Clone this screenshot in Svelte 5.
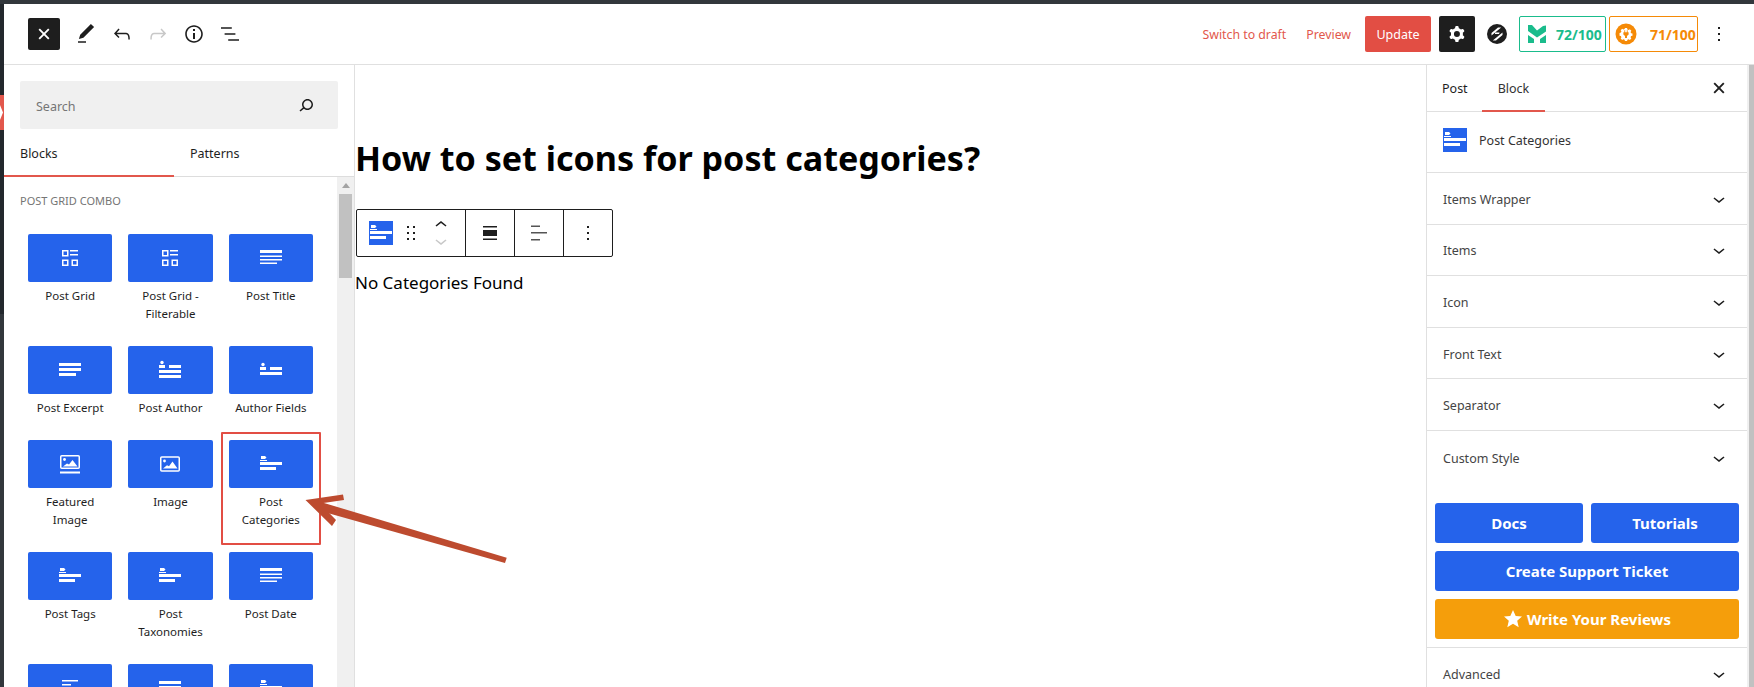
<script>
  const tiles = [
    { label: 'Post Grid', icon: 'grid' },
    { label: 'Post Grid -\nFilterable', icon: 'grid' },
    { label: 'Post Title', icon: 'title' },
    { label: 'Post Excerpt', icon: 'excerpt' },
    { label: 'Post Author', icon: 'author' },
    { label: 'Author Fields', icon: 'fields' },
    { label: 'Featured\nImage', icon: 'featured' },
    { label: 'Image', icon: 'image' },
    { label: 'Post\nCategories', icon: 'cats' },
    { label: 'Post Tags', icon: 'cats' },
    { label: 'Post\nTaxonomies', icon: 'cats' },
    { label: 'Post Date', icon: 'title' },
    { label: '', icon: 'short' },
    { label: '', icon: 'bars' },
    { label: '', icon: 'cats' }
  ];
  const rows = ['Items Wrapper', 'Items', 'Icon', 'Front Text', 'Separator', 'Custom Style'];
</script>

{#snippet chevron()}
  <svg class="chev" width="24" height="24" viewBox="0 0 24 24" fill="#1e1e1e"><path d="M17.5 11.6L12 16l-5.5-4.4.9-1.2L12 14l4.5-3.6 1 1.2z" /></svg>
{/snippet}

{#snippet cross()}
  <svg width="24" height="24" viewBox="0 0 24 24" fill="none" stroke-width="1.9"><path d="M7.2 7.2l9.6 9.6M16.8 7.2l-9.6 9.6" stroke="currentColor" /></svg>
{/snippet}

{#snippet catGlyph()}
  <path fill="#fff" d="M2 4h4l1.5 1.5L6 7H2zM1 8h7v1H1zM1 10h22v3H1zM1 15h16v3H1z" />
{/snippet}

{#snippet glyph(name)}
  <svg class="glyph" width="24" height="24" viewBox="0 0 24 24" fill="#fff">
    {#if name === 'grid'}
      <g fill="none" stroke="#fff" stroke-width="1.5">
        <rect x="4.75" y="4.75" width="5" height="5" /><rect x="4.75" y="14.25" width="5" height="5" /><rect x="14.25" y="14.25" width="5" height="5" />
      </g>
      <rect x="12" y="4" width="8" height="1.5" /><rect x="12" y="8" width="8" height="1.5" />
    {:else if name === 'title'}
      <rect x="1" y="4" width="22" height="3" /><rect x="1" y="9.5" width="22" height="1.5" /><rect x="1" y="13" width="22" height="1.5" /><rect x="1" y="16.5" width="17" height="1.5" />
    {:else if name === 'excerpt'}
      <rect x="1" y="5" width="22" height="3" /><rect x="1" y="10" width="22" height="3" /><rect x="1" y="15" width="17" height="3" />
    {:else if name === 'author'}
      <circle cx="4" cy="4.5" r="1.7" /><rect x="1" y="7" width="6" height="3" /><rect x="11" y="7" width="12" height="3" /><rect x="1" y="12" width="22" height="3" /><rect x="1" y="17" width="22" height="3" />
    {:else if name === 'fields'}
      <circle cx="4" cy="6.5" r="1.7" /><rect x="1" y="9" width="6" height="3" /><rect x="11" y="9" width="12" height="3" /><rect x="1" y="14" width="22" height="3" />
    {:else if name === 'featured'}
      <rect x="2.75" y="3.75" width="18.5" height="12.5" rx="1" fill="none" stroke="#fff" stroke-width="1.5" />
      <circle cx="6.5" cy="7.5" r="1.4" /><path d="M5 14.5l4-3 2 1 3.5-4.5 5 6.5z" /><rect x="2" y="19.5" width="20" height="2" />
    {:else if name === 'image'}
      <rect x="2.75" y="5" width="18.5" height="14" rx="1" fill="none" stroke="#fff" stroke-width="1.5" />
      <circle cx="6.5" cy="9" r="1.4" /><path d="M5 16.5l4-3.2 2 1 3.5-4.8 5 7z" />
    {:else if name === 'cats'}
      {@render catGlyph()}
    {:else if name === 'short'}
      <rect x="4" y="4" width="16" height="1.5" /><rect x="4" y="8" width="9" height="1.5" />
    {:else if name === 'bars'}
      <rect x="1" y="5" width="22" height="3" /><rect x="1" y="10" width="22" height="3" />
    {/if}
  </svg>
{/snippet}

{#snippet blockIcon()}
  <span class="block-icon">
    <svg width="24" height="24" viewBox="0 0 24 24">{@render catGlyph()}</svg>
  </span>
{/snippet}

<div class="page">
  <div class="topbar"></div>
  <div class="body">
    <div class="strip">
      <div class="strip-dark">
        <svg class="strip-red" width="4" height="35" viewBox="0 0 4 35"><rect width="4" height="35" fill="#e2574c" /><path d="M0 10l3 7.5L0 25z" fill="#fff" /></svg>
      </div>
    </div>
    <div class="editor">
      <header class="header">
        <div class="tools">
          <button class="close-btn" aria-label="Close">{@render cross()}</button>
          <svg class="tool" width="24" height="24" viewBox="0 0 24 24"><path d="M20.1 5.1L16.9 2 6.2 12.7l-1.3 4.4 4.5-1.3L20.1 5.1zM4 20.8h8v-1.5H4v1.5z" /></svg>
          <svg class="tool" width="24" height="24" viewBox="0 0 24 24"><path d="M18.3 11.7c-.6-.6-1.4-.9-2.3-.9H6.7l2.9-3.3-1.1-1-4.5 5L8.5 16l1-1-2.7-2.7H16c.5 0 .9.2 1.3.5 1 1 1 3.4 1 4.5v.3h1.5v-.2c0-1.5 0-4.3-1.5-5.7z" /></svg>
          <svg class="tool off" width="24" height="24" viewBox="0 0 24 24"><path d="M15.6 6.5l-1.1 1 2.9 3.3H8c-.9 0-1.7.3-2.3.9-1.4 1.5-1.4 4.2-1.4 5.6v.2h1.5v-.3c0-1.1 0-3.5 1-4.5.3-.3.7-.5 1.3-.5h9.2L14.5 15l1.1 1.1 4.6-4.6-4.6-5z" /></svg>
          <svg class="tool" width="24" height="24" viewBox="0 0 24 24"><path d="M12 3.2c-4.8 0-8.8 3.9-8.8 8.8 0 4.8 3.9 8.8 8.8 8.8 4.8 0 8.8-3.9 8.8-8.8 0-4.8-4-8.8-8.8-8.8zm0 16c-4 0-7.2-3.3-7.2-7.2C4.8 8 8 4.8 12 4.8s7.2 3.3 7.2 7.2c0 4-3.2 7.2-7.2 7.2zM11 17h2v-6h-2v6zm0-8h2V7h-2v2z" /></svg>
          <svg class="tool" width="24" height="24" viewBox="0 0 24 24"><path d="M13.8 5.2H3v1.5h10.8V5.2zm-3.6 12v1.5H21v-1.5H10.2zm7.2-6H6.6v1.5h10.8v-1.5z" /></svg>
        </div>
        <div class="actions">
          <span class="link draft">Switch to draft</span>
          <span class="link preview">Preview</span>
          <button class="update">Update</button>
          <button class="gear" aria-label="Settings">
            <svg width="24" height="24" viewBox="0 0 24 24" fill="#fff"><path fill-rule="evenodd" d="M10.289 4.836A1 1 0 0111.275 4h1.306a1 1 0 01.987.836l.244 1.466c.787.26 1.503.679 2.108 1.218l1.393-.522a1 1 0 011.216.437l.653 1.13a1 1 0 01-.23 1.273l-1.148.944a6.025 6.025 0 010 2.435l1.149.946a1 1 0 01.23 1.272l-.653 1.13a1 1 0 01-1.216.437l-1.394-.522c-.605.54-1.32.958-2.108 1.218l-.244 1.466a1 1 0 01-.987.836h-1.306a1 1 0 01-.986-.836l-.244-1.466a5.995 5.995 0 01-2.108-1.218l-1.394.522a1 1 0 01-1.217-.436l-.653-1.131a1 1 0 01.23-1.272l1.149-.946a6.026 6.026 0 010-2.435l-1.148-.944a1 1 0 01-.23-1.272l.653-1.131a1 1 0 011.217-.437l1.393.522a5.994 5.994 0 012.108-1.218l.244-1.466zM14.929 12a3 3 0 11-6 0 3 3 0 016 0z" /></svg>
          </button>
          <svg class="logo" width="20" height="20" viewBox="0 0 20 20">
            <circle cx="10" cy="10" r="10" fill="#1e1e1e" />
            <path d="M4.5 9L11 3.6h3.2L4.5 11.6zM15.5 11L9 16.4H5.8L15.5 8.4z" fill="#fff" />
            <path d="M8 8.6h4.6L12 10H8z" fill="#fff" />
          </svg>
          <div class="badge green">
            <svg width="18" height="18" viewBox="0 0 18 18"><path fill="#1abc8c" d="M0 0h4l5 5.5L15 1l3-.5v6l-9 6-9-6.5zM0 10l6 4v4H0zM12 14l6-4v8h-6z" /></svg>
            <b>72/100</b>
          </div>
          <div class="badge orange">
            <svg width="22" height="22" viewBox="0 0 22 22">
              <circle cx="11" cy="11" r="10.5" fill="#f58a07" />
              <g transform="translate(11 11) scale(.82) translate(-11 -11)">
                <path fill="#fff" d="M9.7 3.8h2.6l.4 1.7 1.5.6 1.5-.9 1.8 1.8-.9 1.5.6 1.5 1.7.4v2.6l-1.7.4-.6 1.5.9 1.5-1.8 1.8-1.5-.9-1.5.6-.4 1.7H9.7l-.4-1.7-1.5-.6-1.5.9-1.8-1.8.9-1.5-.6-1.5-1.7-.4V9.7l1.7-.4.6-1.5-.9-1.5 1.8-1.8 1.5.9 1.5-.6z" />
                <path fill="#f58a07" d="M9 6.5h1v2.5h2V6.5h1V9h1.2v2.5l-2 2V16h-2.4v-2.5l-2-2V9H9z" />
              </g>
            </svg>
            <b>71/100</b>
          </div>
          <svg class="more" width="24" height="24" viewBox="0 0 24 24"><path d="M13 19h-2v-2h2v2zm0-6h-2v-2h2v2zm0-6h-2V5h2v2z" /></svg>
        </div>
      </header>

      <div class="workspace">
        <aside class="inserter">
          <div class="search-wrap">
            <div class="search">
              <span>Search</span>
              <svg width="24" height="24" viewBox="0 0 24 24" fill="#1e1e1e"><path d="M13.5 6C10.5 6 8 8.5 8 11.5c0 1.1.3 2.1.9 3l-3.4 3 1 1.1 3.4-2.9c1 .9 2.2 1.4 3.6 1.4 3 0 5.5-2.5 5.5-5.5C19 8.5 16.5 6 13.5 6zm0 9.5c-2.2 0-4-1.8-4-4s1.8-4 4-4 4 1.8 4 4-1.8 4-4 4z" /></svg>
            </div>
          </div>
          <div class="tabs">
            <div class="tab active">Blocks</div>
            <div class="tab">Patterns</div>
          </div>
          <div class="list-area">
            <div class="list">
              <h2>POST GRID COMBO</h2>
              <div class="grid">
                {#each tiles as t}
                  <div class="item">
                    <div class="tile">{@render glyph(t.icon)}</div>
                    <div class="label">{t.label}</div>
                  </div>
                {/each}
              </div>
            </div>
            <div class="scroll">
              <span class="up"></span>
              <span class="thumb"></span>
            </div>
          </div>
        </aside>

        <main class="canvas">
          <h1>How to set icons for post categories?</h1>
          <div class="toolbar">
            <div class="tb-group first">
              {@render blockIcon()}
              <svg class="drag" width="24" height="24" viewBox="0 0 24 24" fill="#1e1e1e"><path d="M8 7h2V5H8v2zm0 6h2v-2H8v2zm0 6h2v-2H8v2zm6-14v2h2V5h-2zm0 8h2v-2h-2v2zm0 6h2v-2h-2v2z" /></svg>
              <div class="mover">
                <svg width="24" height="16" viewBox="0 4 24 16" fill="#1e1e1e"><path d="M6.5 12.4L12 8l5.5 4.4-.9 1.2L12 10l-4.5 3.6-1-1.2z" /></svg>
                <svg width="24" height="16" viewBox="0 4 24 16" fill="#c8c8c8"><path d="M17.5 11.6L12 16l-5.5-4.4.9-1.2L12 14l4.5-3.6 1 1.2z" /></svg>
              </div>
            </div>
            <div class="tb-group">
              <svg width="24" height="24" viewBox="0 0 24 24"><path fill="#1e1e1e" d="M5 5h14v1.5H5zM5 9h14v6H5zM5 17.5h14V19H5z" /></svg>
            </div>
            <div class="tb-group">
              <svg width="24" height="24" viewBox="0 0 24 24"><path fill="#555" d="M4 4.5h9V6H4zM4 11h16v1.5H4zM4 18h9v1.5H4z" /></svg>
            </div>
            <div class="tb-group last">
              <svg width="24" height="24" viewBox="0 0 24 24" fill="#1e1e1e"><path d="M13 19h-2v-2h2v2zm0-6h-2v-2h2v2zm0-6h-2V5h2v2z" /></svg>
            </div>
          </div>
          <p class="empty">No Categories Found</p>
        </main>

        <aside class="sidebar">
          <div class="side-inner">
            <div class="side-tabs">
              <div class="side-tabset">
                <span class="stab post">Post</span>
                <span class="stab on">Block</span>
              </div>
              <span class="side-x">{@render cross()}</span>
            </div>
            <div class="card">
              {@render blockIcon()}
              <span>Post Categories</span>
            </div>
            {#each rows as r, i}
              <div class="row" class:plain={i === rows.length - 1}>
                <span>{r}</span>
                {@render chevron()}
              </div>
            {/each}
            <div class="promo">
              <div class="pair">
                <div class="cta">Docs</div>
                <div class="cta">Tutorials</div>
              </div>
              <div class="cta">Create Support Ticket</div>
              <div class="cta amber">
                <svg width="20" height="20" viewBox="0 0 20 20" fill="#fff"><path d="M10 1l2.7 6 6.3.6-4.8 4.2 1.5 6.4L10 14.8l-5.7 3.4 1.5-6.4L1 7.6 7.3 7z" /></svg>
                Write Your Reviews
              </div>
            </div>
            <div class="row adv">
              <span>Advanced</span>
              {@render chevron()}
            </div>
          </div>
          <div class="side-scroll"></div>
        </aside>
      </div>
    </div>
  </div>

  <div class="highlight"></div>
  <svg class="arrow" width="230" height="90" viewBox="0 0 230 90" fill="#bd4b2f">
    <polygon points="10,6 202.7,63.7 201,69 20,18" />
    <polygon points="1.5,6 39,0.5 40,6 16,9.5 32,26 28,32" />
  </svg>
</div>

<style>
  :global(body) {
    margin: 0;
    background: #fff;
  }
  .page {
    position: relative;
    height: 687px;
    overflow: hidden;
    font-family: "Noto Sans", sans-serif;
    color: #1e1e1e;
    font-size: 12.5px;
    display: flex;
    flex-direction: column;
  }
  .topbar {
    height: 4px;
    background: #32373c;
    flex: none;
  }
  .body {
    flex: 1;
    min-height: 0;
    display: flex;
  }
  .strip {
    width: 4px;
    flex: none;
    background: #32373c;
  }
  .strip-dark {
    height: 310px;
    background: #23282d;
    padding-top: 91px;
    box-sizing: border-box;
  }
  .strip-red {
    display: block;
  }
  .editor {
    flex: 1;
    min-width: 0;
    display: flex;
    flex-direction: column;
  }
  .header {
    height: 61px;
    flex: none;
    box-sizing: border-box;
    border-bottom: 1px solid #e0e0e0;
    display: flex;
    justify-content: space-between;
    align-items: center;
    padding: 0 23px 0 24px;
  }
  .tools {
    display: flex;
    align-items: center;
    gap: 12px;
  }
  .close-btn {
    width: 32px;
    height: 32px;
    border: 0;
    border-radius: 2px;
    padding: 0;
    color: #fff;
    background: #1e1e1e;
    display: flex;
    align-items: center;
    justify-content: center;
    margin-right: 2px;
  }
  .tool, .more {
    fill: #1e1e1e;
  }
  .tool.off {
    fill: #c8c8c8;
  }
  .actions {
    display: flex;
    align-items: center;
  }
  .link {
    color: #e2574c;
    font-size: 12.3px;
  }
  .draft {
    margin-right: 20px;
  }
  .preview {
    margin-right: 14px;
  }
  .update {
    width: 66px;
    height: 36px;
    border: 0;
    border-radius: 2px;
    background: #e24e44;
    color: #fff;
    font: 12.5px "Noto Sans", sans-serif;
    padding: 0;
    margin-right: 8px;
  }
  .gear {
    width: 36px;
    height: 36px;
    border: 0;
    border-radius: 2px;
    padding: 0;
    background: #1e1e1e;
    display: flex;
    align-items: center;
    justify-content: center;
    margin-right: 12px;
  }
  .logo {
    margin-right: 12px;
  }
  .badge {
    height: 36px;
    box-sizing: border-box;
    border-radius: 2px;
    border: 1px solid;
    display: flex;
    align-items: center;
    font-size: 14px;
  }
  .badge b {
    font-weight: 700;
  }
  .green {
    width: 87px;
    color: #1abc8c;
    border-color: #1abc8c;
    padding-left: 8px;
    gap: 10px;
    margin-right: 3px;
  }
  .orange {
    width: 89px;
    color: #f58a07;
    border-color: #f58a07;
    padding-left: 5px;
    gap: 13px;
    margin-right: 9px;
  }
  .workspace {
    flex: 1;
    min-height: 0;
    display: flex;
  }
  .inserter {
    width: 351px;
    flex: none;
    box-sizing: border-box;
    border-right: 1px solid #e0e0e0;
    display: flex;
    flex-direction: column;
  }
  .search-wrap {
    padding: 16px 16px 0;
  }
  .search {
    height: 48px;
    border-radius: 2px;
    background: #f0f0f0;
    display: flex;
    align-items: center;
    justify-content: space-between;
    padding: 2px 20px 0 16px;
    box-sizing: border-box;
    color: #757575;
  }
  .search svg {
    margin-top: -2px;
  }
  .tabs {
    height: 48px;
    box-sizing: border-box;
    border-bottom: 1px solid #ddd;
    display: flex;
    flex: none;
  }
  .tab {
    width: 170px;
    box-sizing: border-box;
    height: 48px;
    padding-left: 16px;
    line-height: 49px;
  }
  .tab.active {
    box-shadow: inset 0 -2px 0 #e2574c;
  }
  .list-area {
    flex: 1;
    min-height: 0;
    display: flex;
  }
  .list {
    flex: 1;
    min-width: 0;
    padding: 16px 24px 0;
    box-sizing: border-box;
  }
  .list h2 {
    margin: 0 0 25px -8px;
    font-size: 11px;
    line-height: 16px;
    font-weight: 400;
    color: #757575;
  }
  .grid {
    display: grid;
    grid-template-columns: repeat(3, 1fr);
    column-gap: 16px;
    row-gap: 23px;
  }
  .tile {
    height: 48px;
    border-radius: 2px;
    background: #2563eb;
    display: flex;
    align-items: center;
    justify-content: center;
  }
  .label {
    margin-top: 5px;
    text-align: center;
    font-size: 11.5px;
    line-height: 18px;
    white-space: pre-line;
  }
  .scroll {
    width: 17px;
    flex: none;
    background: #f0f0f0;
    display: flex;
    flex-direction: column;
    align-items: center;
  }
  .up {
    margin-top: 6px;
    width: 0;
    height: 0;
    border-left: 4px solid transparent;
    border-right: 4px solid transparent;
    border-bottom: 5px solid #a3a3a3;
  }
  .thumb {
    margin-top: 6px;
    width: 13px;
    height: 84px;
    background: #c1c1c1;
  }
  .canvas {
    flex: 1;
    min-width: 0;
    padding: 74px 1px 0;
    box-sizing: border-box;
    color: #000;
  }
  h1 {
    margin: 0 0 0 -1px;
    font-size: 34.1px;
    line-height: 38px;
    font-weight: 700;
  }
  .toolbar {
    margin-top: 32px;
    width: 257px;
    height: 48px;
    box-sizing: border-box;
    border: 1px solid #1e1e1e;
    border-radius: 2px;
    display: flex;
  }
  .tb-group {
    width: 49px;
    border-left: 1px solid #1e1e1e;
    display: flex;
    align-items: center;
    justify-content: center;
    box-sizing: border-box;
  }
  .tb-group.first {
    width: 108px;
    border-left: 0;
    justify-content: flex-start;
    padding-left: 12px;
  }
  .tb-group.last {
    flex: 1;
  }
  .drag {
    margin-left: 6px;
  }
  .mover {
    margin-left: 6px;
    display: flex;
    flex-direction: column;
  }
  .block-icon {
    width: 24px;
    height: 24px;
    background: #2563eb;
    display: block;
    flex: none;
  }
  .block-icon svg {
    display: block;
  }
  .empty {
    margin: 14px 0 0 -1px;
    font-size: 17px;
    line-height: 24px;
  }
  .sidebar {
    width: 328px;
    flex: none;
    display: flex;
    box-sizing: border-box;
    border-left: 1px solid #e0e0e0;
  }
  .side-inner {
    flex: 1;
    min-width: 0;
  }
  .side-scroll {
    width: 7px;
    flex: none;
    box-sizing: border-box;
    background: #c1c1c1;
    border-left: 2px solid #f0f0f0;
  }
  .side-tabs {
    height: 47px;
    box-sizing: border-box;
    border-bottom: 1px solid #e0e0e0;
    display: flex;
    justify-content: space-between;
    align-items: center;
    padding-right: 16px;
  }
  .side-tabset {
    display: flex;
    height: 47px;
  }
  .side-x {
    display: flex;
    color: #1e1e1e;
    margin-top: -1px;
  }
  .stab {
    padding: 0 16px;
    line-height: 48px;
    color: #1e1e1e;
    box-sizing: border-box;
  }
  .stab.post {
    padding: 0 14px 0 15px;
  }
  .stab.on {
    box-shadow: inset 0 -2px 0 #e2574c;
    color: #333;
  }
  .card {
    height: 61px;
    box-sizing: border-box;
    border-bottom: 1px solid #e0e0e0;
    display: flex;
    align-items: center;
    gap: 12px;
    padding-left: 16px;
    padding-bottom: 4px;
    color: #333;
  }
  .row {
    height: 51.6px;
    box-sizing: border-box;
    border-bottom: 1px solid #e0e0e0;
    display: flex;
    align-items: center;
    justify-content: space-between;
    padding: 2px 16px 0;
    color: #444;
  }
  .row.plain {
    border-bottom: 0;
    height: 54px;
    padding-top: 1px;
  }
  .row.adv {
    border-bottom: 0;
  }
  .chev {
    flex: none;
    margin-top: -1px;
  }
  .promo {
    padding: 18px 8px 8px;
    display: flex;
    flex-direction: column;
    gap: 8px;
    border-bottom: 1px solid #e0e0e0;
  }
  .pair {
    display: flex;
    gap: 8px;
  }
  .pair .cta {
    flex: 1;
  }
  .cta {
    height: 40px;
    border-radius: 3px;
    background: #2563eb;
    color: #fff;
    font-weight: 700;
    font-size: 15px;
    display: flex;
    align-items: center;
    justify-content: center;
  }
  .amber {
    background: #f59e0b;
    gap: 4px;
  }
  .highlight {
    position: absolute;
    left: 221px;
    top: 432px;
    width: 100px;
    height: 113px;
    box-sizing: border-box;
    border: 2px solid #e24e44;
    border-radius: 1px;
  }
  .arrow {
    position: absolute;
    left: 304px;
    top: 494px;
  }
</style>
